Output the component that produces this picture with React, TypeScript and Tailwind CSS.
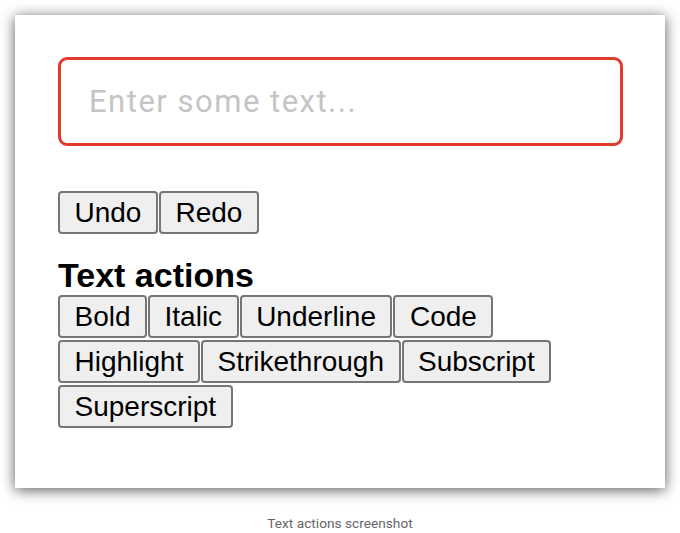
const rowOne = ["Undo", "Redo"];
const textActions = [
  "Bold",
  "Italic",
  "Underline",
  "Code",
  "Highlight",
  "Strikethrough",
  "Subscript",
  "Superscript",
];

function ActionButton({ label }: { label: string }) {
  return (
    <button className="rounded-[4px] border-2 border-[#767676] bg-[#efefef] px-[14.5px] py-[3.5px] text-[28px] leading-[32px] text-black font-['Liberation_Sans',Arial,sans-serif]">
      {label}
    </button>
  );
}

export default function App() {
  return (
    <div className="min-h-screen bg-white pt-[15px]">
      {/* Card */}
      <div className="mx-[15px] h-[473px] w-[650px] bg-white px-[43px] pt-[42px] shadow-[0_2px_13px_rgba(0,0,0,0.65)]">
        <input
          type="text"
          placeholder="Enter some text..."
          className="block h-[89px] w-[565px] rounded-[9px] border-[3px] border-[#e23a2e] bg-white pl-[28px] text-[31px] tracking-[1.5px] text-black outline-none placeholder:text-[#c4c4c4] font-['Roboto',sans-serif]"
        />

        <div className="mt-[45px] flex gap-x-[1px]">
          {rowOne.map((label) => (
            <ActionButton key={label} label={label} />
          ))}
        </div>

        <h3 className="mt-[22px] text-[34px] font-bold leading-[39px] text-black font-['Liberation_Sans',Arial,sans-serif]">
          Text actions
        </h3>

        <div className="flex flex-wrap gap-x-[1px] gap-y-[2px]">
          {textActions.map((label) => (
            <ActionButton key={label} label={label} />
          ))}
        </div>
      </div>

      <p className="mt-[28px] text-center text-[13.7px] leading-[15px] text-[#666666] font-['Roboto',sans-serif]">
        Text actions screenshot
      </p>
    </div>
  );
}
